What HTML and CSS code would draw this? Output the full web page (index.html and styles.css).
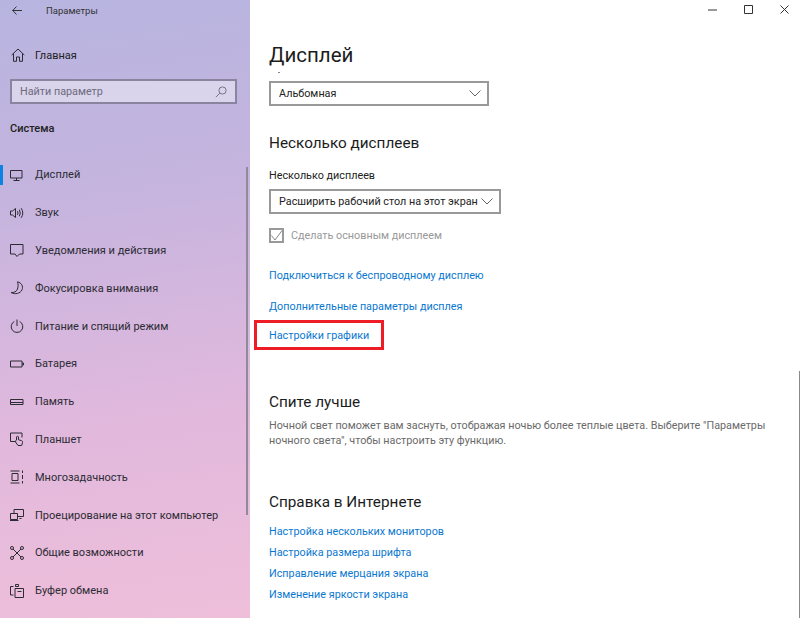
FILE: index.html
```html
<!DOCTYPE html>
<html lang="ru">
<head>
    <meta charset="UTF-8">
    <title>Параметры</title>
    <link rel="stylesheet" href="styles.css">
</head>
<body>
    <div class="window">
        <aside class="sidebar">
            <div class="titlebar">
                <svg class="back" width="10" height="9" viewBox="0 0 10 9"><path d="M4.500.500.700 4.500l3.800 4M.700 4.500h9.300"/></svg>
                <span class="app-name">Параметры</span>
            </div>
            <div class="home">
                <svg class="icon" width="14" height="14" viewBox="0 0 14 14"><path d="M.7 7 7 1l6.300 6M2.500 5.500v7.800h3V9h3v4.300h3V5.500"/></svg>
                <span>Главная</span>
            </div>
            <div class="search">
                <span>Найти параметр</span>
                <svg class="search-icon" width="12" height="12" viewBox="0 0 12 12"><circle cx="7.500" cy="4.500" r="3.600"/><path d="M5 7 .8 11.200"/></svg>
            </div>
            <div class="group">Система</div>
            <nav class="nav">
                <a class="nav-item active">
                    <svg class="icon" width="14" height="14" viewBox="0 0 14 14"><path d="M.5 2.500h11.500v7.500H.5zM6.500 10v2.500M3.500 12.500h6"/></svg>
                    Дисплей
                </a>
                <a class="nav-item">
                    <svg class="icon" width="14" height="14" viewBox="0 0 14 14"><path d="M.5 5v4h2l3 2.500v-9L2.500 5zM7.500 5.200q1 1.800 0 3.600M9.300 3.700q2 3.300 0 6.600M11.200 2.200q3.200 4.800 0 9.600"/></svg>
                    Звук
                </a>
                <a class="nav-item">
                    <svg class="icon" width="14" height="14" viewBox="0 0 14 14"><path d="M.5 1.500h12.500v9.500H9.500L7 13.500 5 11H.5z"/></svg>
                    Уведомления и действия
                </a>
                <a class="nav-item">
                    <svg class="icon" width="14" height="14" viewBox="0 0 14 14"><path d="M7.500.8c4 1 6 4.500 4.500 8-1.500 3.700-7 5-11 2.700 3 .3 5.500-.8 6.500-3.500.8-2.500.800-4.700 0-7.200z"/></svg>
                    Фокусировка внимания
                </a>
                <a class="nav-item">
                    <svg class="icon" width="14" height="14" viewBox="0 0 14 14"><path d="M7 .5v6.500M4.300 2.500a5.800 5.800 0 1 0 5.400 0"/></svg>
                    Питание и спящий режим
                </a>
                <a class="nav-item">
                    <svg class="icon" width="14" height="14" viewBox="0 0 14 14"><path d="M.5 4h11.500v6H.5zM12 6h1.500v2H12"/></svg>
                    Батарея
                </a>
                <a class="nav-item">
                    <svg class="icon" width="14" height="14" viewBox="0 0 14 14"><path d="M.5 4.500h12.500v5H.5zM.5 7.500h12.500"/></svg>
                    Память
                </a>
                <a class="nav-item">
                    <svg class="icon" width="14" height="14" viewBox="0 0 14 14"><path d="M5 9.500H.5V1h11.500v4.500M6.500 8V4.800q1-1 2 0v3l3 .8q1.500.5 1 2l-.8 2.900H8L5.500 10q0-1.500 1-2z"/></svg>
                    Планшет
                </a>
                <a class="nav-item">
                    <svg class="icon" width="14" height="14" viewBox="0 0 14 14"><path d="M.5 1h9M.5 13h9M2 3.500h6v7H2zM12.500.5v2.500M12.500 5v4M12.500 11v2.500"/></svg>
                    Многозадачность
                </a>
                <a class="nav-item">
                    <svg class="icon" width="14" height="14" viewBox="0 0 14 14"><path d="M4 5V1.500h9.500v7H8M.5 5.500h7v6h-7zM0 12.500h8.500M9.500 10.500h2"/></svg>
                    Проецирование на этот компьютер
                </a>
                <a class="nav-item">
                    <svg class="icon" width="14" height="14" viewBox="0 0 14 14"><path d="M3 3l8 8M11 3l-8 8"/><circle cx="2" cy="2" r="1.500"/><circle cx="12" cy="2" r="1.500"/><circle cx="2" cy="12" r="1.500"/><circle cx="12" cy="12" r="1.500"/></svg>
                    Общие возможности
                </a>
                <a class="nav-item">
                    <svg class="icon" width="14" height="14" viewBox="0 0 14 14"><path d="M3.500 11H.5V2.500h3M5 4.500h8.500v9H5zM5.500 2.500h3v-2h-3zM7.500 7.500h4"/></svg>
                    Буфер обмена
                </a>
            </nav>
            <div class="side-scroll"></div>
        </aside>

        <main class="content">
            <div class="window-buttons">
                <svg width="9" height="9" viewBox="0 0 9 9"><path d="M0 5h9"/></svg>
                <svg width="9" height="9" viewBox="0 0 9 9"><path d="M.5.500h8v8h-8z"/></svg>
                <svg width="9" height="9" viewBox="0 0 9 9"><path d="M.5.500l8 8M8.500.500l-8 8"/></svg>
            </div>
            <h1>Дисплей</h1>
            <div class="clipped"></div>
            <div class="select select-small">
                <span>Альбомная</span>
                <svg class="chevron" width="12" height="7" viewBox="0 0 12 7"><path d="M.5.500 6 6 11.500.500"/></svg>
            </div>

            <h2 class="first">Несколько дисплеев</h2>
            <div class="label">Несколько дисплеев</div>
            <div class="select select-wide">
                <span>Расширить рабочий стол на этот экран</span>
                <svg class="chevron" width="12" height="7" viewBox="0 0 12 7"><path d="M.5.500 6 6 11.500.500"/></svg>
            </div>
            <div class="check">
                <svg class="checkbox" width="15" height="15" viewBox="0 0 15 15"><path d="M1 1h13v13H1z"/><path class="tick" d="M2.500 7.500l3.500 4.500 7-9.500"/></svg>
                <span>Сделать основным дисплеем</span>
            </div>

            <a class="link link-first">Подключиться к беспроводному дисплею</a>
            <a class="link link-next">Дополнительные параметры дисплея</a>
            <div class="marked"><a class="link">Настройки графики</a></div>

            <h2 class="sleep">Спите лучше</h2>
            <p class="note">Ночной свет поможет вам заснуть, отображая ночью более теплые цвета. Выберите "Параметры ночного света", чтобы настроить эту функцию.</p>

            <h2 class="help">Справка в Интернете</h2>
            <div class="help-links">
                <a class="link">Настройка нескольких мониторов</a>
                <a class="link">Настройка размера шрифта</a>
                <a class="link">Исправление мерцания экрана</a>
                <a class="link">Изменение яркости экрана</a>
            </div>
            <div class="main-scroll"></div>
        </main>
    </div>
</body>
</html>
```

FILE: styles.css
```css
html, body {
    margin: 0;
    height: 100%;
    overflow: hidden;
}

body {
    font-family: Roboto, "Open Sans", sans-serif;
    font-size: 10.800px;
    color: #222;
}

.window {
    display: flex;
    width: 800px;
    height: 618px;
    overflow: hidden;
}

.sidebar {
    position: relative;
    width: 250px;
    flex-shrink: 0;
    background: linear-gradient(172deg, #b7b5e0 0%, #c4b4de 30%, #e0b8dd 65%, #efbfda 100%);
}

.titlebar {
    display: flex;
    align-items: center;
    height: 20px;
}

.back {
    margin-left: 12px;
    fill: none;
    stroke: #333;
    stroke-width: 1;
}

.app-name {
    margin-left: 24px;
    font-size: 9.500px;
    color: #333;
}

.icon {
    fill: none;
    stroke: #2b2b33;
    stroke-width: 1;
    flex-shrink: 0;
}

.home {
    display: flex;
    align-items: center;
    gap: 10px;
    height: 20px;
    margin-top: 25px;
    padding-left: 11px;
    font-size: 11px;
}

.search {
    display: flex;
    align-items: center;
    justify-content: space-between;
    box-sizing: border-box;
    width: 227px;
    height: 25px;
    margin: 14px 0 0 10px;
    padding: 0 8px 0 8px;
    border: 2px solid #8a84a0;
    background: rgba(255, 255, 255, 0.42);
    color: #6d6a7c;
}

.search-icon {
    fill: none;
    stroke: #77748a;
    stroke-width: 1;
}

.group {
    margin: 15px 0 0 10px;
    height: 20px;
    line-height: 20px;
    font-size: 11px;
    font-weight: 500;
    color: #222;
}

.nav {
    margin-top: 17px;
}

.nav-item {
    position: relative;
    display: flex;
    align-items: center;
    gap: 11px;
    box-sizing: border-box;
    height: 37.800px;
    padding-left: 10px;
    font-size: 11px;
    color: #2b2b33;
}

.nav-item.active::before {
    content: "";
    position: absolute;
    left: 0;
    top: 9px;
    width: 3px;
    height: 20px;
    background: #0a84e0;
}

.side-scroll {
    position: absolute;
    left: 246px;
    top: 167px;
    width: 2px;
    height: 348px;
    background: #8f8a9c;
}

.content {
    position: relative;
    flex: 1;
    padding-left: 19px;
    background: #fff;
}

.window-buttons {
    display: flex;
    gap: 27px;
    position: absolute;
    top: 5px;
    right: 11px;
}

.window-buttons svg {
    fill: none;
    stroke: #333;
    stroke-width: 1;
}

h1 {
    margin: 41px 0 0;
    height: 29px;
    line-height: 29px;
    font-size: 20.500px;
    font-weight: 400;
    color: #1c1c1c;
}

.clipped {
    width: 2px;
    height: 1px;
    margin: 2px 0 0 9px;
    background: #888;
}

h2 {
    margin: 0;
    height: 22px;
    line-height: 22px;
    font-size: 15.300px;
    font-weight: 400;
    color: #1c1c1c;
}

h2.first {
    margin-top: 26px;
}

.select {
    display: flex;
    align-items: center;
    justify-content: space-between;
    box-sizing: border-box;
    height: 25px;
    padding: 0 6px 0 8px;
    border: 2px solid #999;
    background: #fff;
    color: #222;
}

.select-small {
    width: 220px;
    margin-top: 8px;
}

.select-wide {
    width: 232px;
    margin-top: 5px;
}

.chevron {
    fill: none;
    stroke: #666;
    stroke-width: 1;
}

.label {
    margin-top: 14px;
    height: 16px;
    line-height: 16px;
}

.check {
    display: flex;
    align-items: center;
    gap: 7px;
    height: 20px;
    margin-top: 11px;
    color: #999;
}

.checkbox {
    fill: none;
    stroke: #999;
    stroke-width: 2;
}

.checkbox .tick {
    stroke: #888;
    stroke-width: 1;
}

.link {
    display: block;
    line-height: 16px;
    color: #0a78d0;
}

.link-first {
    margin-top: 23px;
}

.link-next {
    margin-top: 15px;
}

.marked {
    box-sizing: border-box;
    width: 130px;
    height: 30px;
    margin: 5px 0 0 -15px;
    padding: 5px 0 0 12px;
    border: 3px solid #ee1c25;
}

h2.sleep {
    margin-top: 41px;
}

.note {
    width: 510px;
    margin: 5px 0 0;
    line-height: 15px;
    color: #6a6a6a;
}

h2.help {
    margin-top: 43px;
}

.help-links {
    display: flex;
    flex-direction: column;
    gap: 5px;
    margin-top: 11px;
}

.main-scroll {
    position: absolute;
    right: 0;
    top: 371px;
    width: 1px;
    height: 247px;
    background: #8a8a8a;
}
```
